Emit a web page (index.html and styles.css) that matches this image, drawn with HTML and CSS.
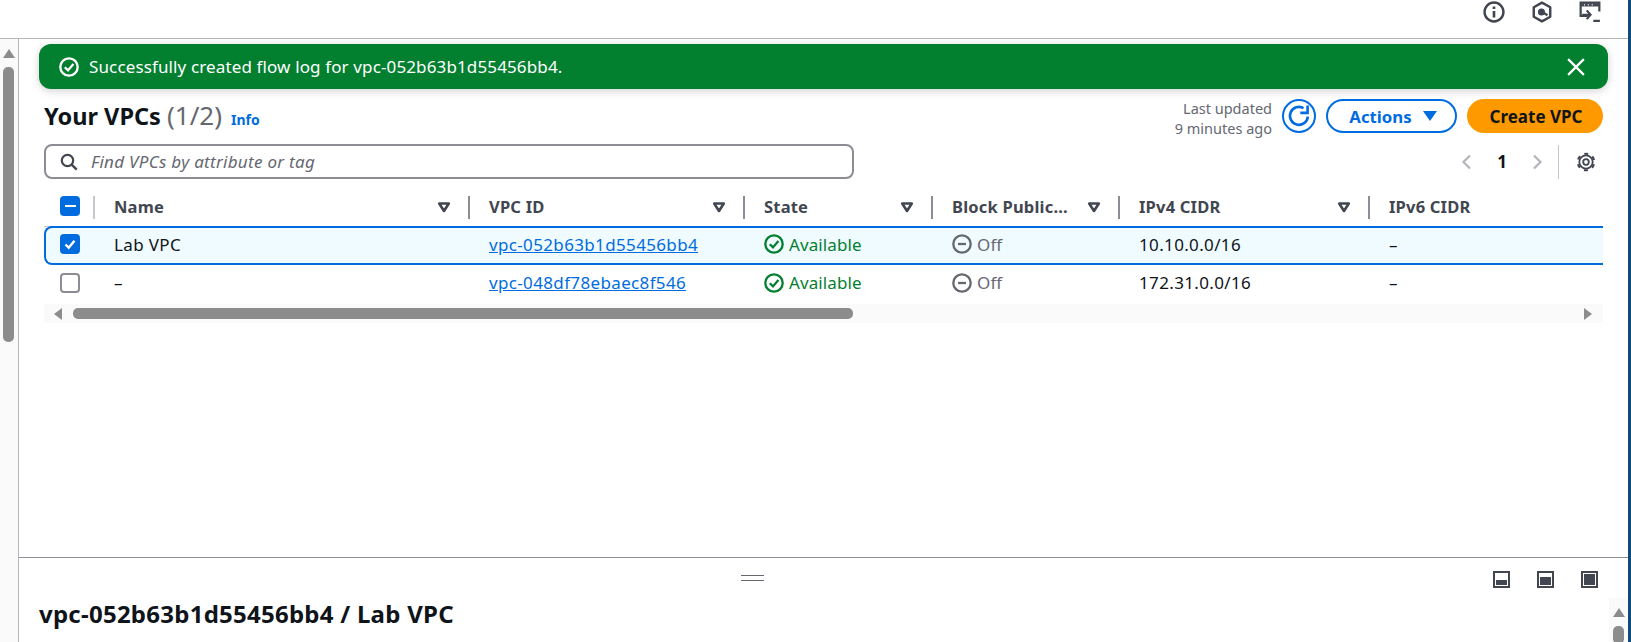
FILE: index.html
```html
<!DOCTYPE html>
<html lang="en">

<head>
    <meta charset="UTF-8">
    <meta name="viewport" content="width=device-width, initial-scale=1.0">
    <title>Your VPCs</title>
    <link rel="stylesheet" href="styles.css">
</head>

<body>

    <svg class="sprite" width="0" height="0">
        <symbol id="caret" viewBox="0 0 16 16">
            <path d="M3.200 4.500h9.600L8 12z" fill="none" stroke="currentColor" stroke-width="2.600" stroke-linejoin="round"/>
        </symbol>
        <symbol id="ok" viewBox="0 0 20 20">
            <circle cx="10" cy="10" r="8.700" fill="none" stroke="currentColor" stroke-width="2.300"/>
            <path d="M5.800 10.200l3.200 3.200 5.400-6.400" fill="none" stroke="currentColor" stroke-width="2.300"/>
        </symbol>
        <symbol id="off" viewBox="0 0 20 20">
            <circle cx="10" cy="10" r="8.700" fill="none" stroke="currentColor" stroke-width="2.300"/>
            <path d="M6 10h8" fill="none" stroke="currentColor" stroke-width="2.300"/>
        </symbol>
    </svg>

    <div class="app">
        <div class="topbar">
            <svg class="top-icon" viewBox="0 0 20 20">
                <circle cx="10" cy="10" r="8.600" fill="none" stroke="currentColor" stroke-width="2.200"/>
                <path d="M10 9v6M10 5v2.200" fill="none" stroke="currentColor" stroke-width="2.400"/>
            </svg>
            <svg class="top-icon" viewBox="0 0 20 20">
                <path d="M10 1.500l7.500 4.200v8.600L10 18.500l-7.500-4.200V5.700z" fill="none" stroke="currentColor" stroke-width="2.200" stroke-linejoin="round"/>
                <circle cx="9.500" cy="10" r="3.200" fill="currentColor"/>
                <path d="M11 10.500l4 2.500" fill="none" stroke="currentColor" stroke-width="2"/>
            </svg>
            <svg class="top-icon" viewBox="0 0 20 20">
                <path d="M8 13.500H1.500v-12h17v8" fill="none" stroke="currentColor" stroke-width="2"/>
                <path d="M2 2h16v3H2z" fill="currentColor"/>
                <path d="M4.500 3.500h1M8 3.500h1M11.500 3.500h1" stroke="#fff" stroke-width="1"/>
                <path d="M7 8.500l3.500 4-3.500 4M3 12.500h7M13 18h6" fill="none" stroke="currentColor" stroke-width="2"/>
            </svg>
        </div>

        <div class="workspace">
            <div class="side-scroll">
                <span class="arrow-up"></span>
                <span class="side-thumb"></span>
            </div>

            <div class="panes">
                <div class="main-pane">
                    <div class="flash">
                        <svg class="flash-icon" viewBox="0 0 20 20"><use href="#ok"/></svg>
                        <span class="flash-text">Successfully created flow log for vpc-052b63b1d55456bb4.</span>
                        <svg class="flash-close" viewBox="0 0 16 16">
                            <path d="M1 1l14 14M15 1L1 15" fill="none" stroke="currentColor" stroke-width="2"/>
                        </svg>
                    </div>

                    <div class="page-head">
                        <div class="title-wrap">
                            <h1 class="title">Your VPCs <span class="count">(1/2)</span></h1>
                            <a class="info" href="#">Info</a>
                        </div>
                        <div class="head-actions">
                            <div class="updated">Last updated<br>9 minutes ago</div>
                            <button class="btn btn-icon">
                                <svg viewBox="0 0 20 20" width="26" height="26">
                                    <path d="M16.800 10.500A6.900 6.900 0 1 1 13.500 4" fill="none" stroke="currentColor" stroke-width="2"/>
                                    <path d="M16.600 2v5.600H11" fill="none" stroke="currentColor" stroke-width="2"/>
                                </svg>
                            </button>
                            <button class="btn btn-actions">Actions <span class="btn-caret"></span></button>
                            <button class="btn btn-primary">Create VPC</button>
                        </div>
                    </div>

                    <div class="filter-row">
                        <div class="search">
                            <svg viewBox="0 0 18 18" width="18" height="18">
                                <circle cx="7.500" cy="7.500" r="5.700" fill="none" stroke="currentColor" stroke-width="2.200"/>
                                <path d="M11.700 11.700l5 5" fill="none" stroke="currentColor" stroke-width="2.400"/>
                            </svg>
                            <span class="search-text">Find VPCs by attribute or tag</span>
                        </div>
                        <div class="pager">
                            <svg class="chev" viewBox="0 0 12 18"><path d="M10 2.500L3.500 9l6.500 6.500" fill="none" stroke="currentColor" stroke-width="2.200"/></svg>
                            <span class="page-no">1</span>
                            <svg class="chev" viewBox="0 0 12 18"><path d="M2 2.500L8.500 9 2 15.500" fill="none" stroke="currentColor" stroke-width="2.200"/></svg>
                            <span class="pager-sep"></span>
                            <svg class="gear" viewBox="0 0 20 20">
                                <circle cx="10" cy="10" r="6.700" fill="none" stroke="currentColor" stroke-width="1.800"/>
                                <circle cx="10" cy="10" r="8.300" fill="none" stroke="currentColor" stroke-width="2" stroke-dasharray="4 4.690" stroke-dashoffset="-2.340"/>
                                <circle cx="10" cy="10" r="2.800" fill="none" stroke="currentColor" stroke-width="1.800"/>
                            </svg>
                        </div>
                    </div>

                    <div class="table">
                        <div class="row row-head">
                            <div class="cell cell-check"><span class="check check-on check-mixed"></span></div>
                            <div class="cell col-head"><span>Name</span><svg class="caret"><use href="#caret"/></svg></div>
                            <div class="cell col-head"><span>VPC ID</span><svg class="caret"><use href="#caret"/></svg></div>
                            <div class="cell col-head"><span>State</span><svg class="caret"><use href="#caret"/></svg></div>
                            <div class="cell col-head"><span>Block Public...</span><svg class="caret"><use href="#caret"/></svg></div>
                            <div class="cell col-head"><span>IPv4 CIDR</span><svg class="caret"><use href="#caret"/></svg></div>
                            <div class="cell col-head col-last"><span>IPv6 CIDR</span></div>
                        </div>

                        <div class="row row-selected">
                            <div class="cell cell-check">
                                <span class="check check-on">
                                    <svg viewBox="0 0 20 20" width="20" height="20"><path d="M5.500 10.500l3.200 3.200 5.800-7" fill="none" stroke="#fff" stroke-width="2.400"/></svg>
                                </span>
                            </div>
                            <div class="cell">Lab VPC</div>
                            <div class="cell"><a class="link" href="#">vpc-052b63b1d55456bb4</a></div>
                            <div class="cell status-ok"><svg class="status-icon"><use href="#ok"/></svg>Available</div>
                            <div class="cell status-off"><svg class="status-icon"><use href="#off"/></svg>Off</div>
                            <div class="cell">10.10.0.0/16</div>
                            <div class="cell">–</div>
                        </div>

                        <div class="row">
                            <div class="cell cell-check"><span class="check"></span></div>
                            <div class="cell">–</div>
                            <div class="cell"><a class="link" href="#">vpc-048df78ebaec8f546</a></div>
                            <div class="cell status-ok"><svg class="status-icon"><use href="#ok"/></svg>Available</div>
                            <div class="cell status-off"><svg class="status-icon"><use href="#off"/></svg>Off</div>
                            <div class="cell">172.31.0.0/16</div>
                            <div class="cell">–</div>
                        </div>

                        <div class="h-scroll">
                            <span class="arrow-left"></span>
                            <span class="h-thumb"></span>
                            <span class="arrow-right"></span>
                        </div>
                    </div>
                </div>

                <div class="split-pane">
                    <div class="split-bar">
                        <span class="handle"></span>
                        <div class="split-icons">
                            <span class="split-icon"><span class="fill-sm"></span></span>
                            <span class="split-icon"><span class="fill-md"></span></span>
                            <span class="split-icon"><span class="fill-lg"></span></span>
                        </div>
                    </div>
                    <div class="split-body">
                        <h2 class="split-title">vpc-052b63b1d55456bb4 / Lab VPC</h2>
                        <div class="split-scroll">
                            <span class="arrow-up"></span>
                            <span class="split-thumb"></span>
                        </div>
                    </div>
                </div>
            </div>
        </div>
    </div>

</body>

</html>
```

FILE: styles.css
```css
* {
    box-sizing: border-box;
}

html,
body {
    margin: 0;
    height: 642px;
    overflow: hidden;
}

body {
    background: #0f4a7c;
    color: #0f141a;
    font-family: "Noto Sans", sans-serif;
    font-size: 17px;
}

.sprite {
    position: absolute;
}

.app {
    width: 1628px;
    height: 642px;
    background: #fff;
    display: flex;
    flex-direction: column;
}

/* top bar */
.topbar {
    height: 39px;
    flex: none;
    border-bottom: 1px solid #b4b4bb;
    display: flex;
    justify-content: flex-end;
    gap: 26px;
    padding: 1px 27px 0 0;
    color: #424650;
}

.top-icon {
    width: 22px;
    height: 22px;
}

.workspace {
    flex: 1;
    display: flex;
    min-height: 0;
}

.side-scroll {
    width: 19px;
    flex: none;
    background: #fafafa;
    border-right: 1px solid #b4b4bb;
    padding: 10px 0 0 3px;
    display: flex;
    flex-direction: column;
    gap: 9px;
}

.arrow-up {
    width: 0;
    height: 0;
    border-left: 6px solid transparent;
    border-right: 6px solid transparent;
    border-bottom: 9px solid #8c8c8c;
}

.side-thumb {
    width: 11px;
    height: 275px;
    border-radius: 5px;
    background: #8c8c8c;
}

.panes {
    flex: 1;
    min-width: 0;
    display: flex;
    flex-direction: column;
}

.main-pane {
    height: 518px;
    flex: none;
    padding: 5px 25px 0 25px;
}

/* flash */
.flash {
    height: 45px;
    margin: 0 -5px 0 -5px;
    padding: 0 23px 0 20px;
    border-radius: 12px;
    background: #037f30;
    color: #fff;
    display: flex;
    align-items: center;
    box-shadow: 0 2px 8px rgba(0, 7, 22, 0.18);
}

.flash-icon {
    width: 20px;
    height: 20px;
}

.flash-text {
    margin-left: 10px;
    flex: 1;
    letter-spacing: 0.13px;
}

.flash-close {
    width: 18px;
    height: 18px;
}

/* page header */
.page-head {
    height: 34px;
    margin-top: 10px;
    display: flex;
    justify-content: space-between;
}

.title-wrap {
    display: flex;
    align-items: baseline;
    gap: 9px;
}

.title {
    margin: 0;
    font-size: 23.5px;
    font-weight: 700;
    line-height: 32px;
}

.count {
    font-size: 26px;
    font-weight: 400;
    color: #656871;
}

.info {
    color: #006ce0;
    font-size: 14px;
    font-weight: 700;
    text-decoration: none;
}

.head-actions {
    display: flex;
    align-items: center;
    gap: 10px;
}

.updated {
    padding-top: 4px;
    font-size: 14.5px;
    line-height: 20px;
    color: #656871;
    text-align: right;
}

.btn {
    height: 34px;
    border-radius: 17px;
    font-family: inherit;
    font-size: 17px;
    font-weight: 700;
    display: flex;
    align-items: center;
    justify-content: center;
}

.btn-icon {
    width: 34px;
    padding: 0;
    background: #fff;
    border: 2px solid #006ce0;
    color: #006ce0;
}

.btn-actions {
    width: 131px;
    gap: 11px;
    padding: 0 0 0 3px;
    font-size: 16.8px;
    background: #fff;
    border: 2px solid #006ce0;
    color: #006ce0;
}

.btn-caret {
    width: 0;
    height: 0;
    border-left: 7px solid transparent;
    border-right: 7px solid transparent;
    border-top: 10px solid #006ce0;
}

.btn-primary {
    width: 136px;
    padding: 0 0 0 2px;
    background: #ff9900;
    border: none;
    color: #0f141a;
}

/* filter row */
.filter-row {
    height: 35px;
    margin-top: 11px;
    display: flex;
    justify-content: space-between;
}

.search {
    width: 810px;
    border: 2px solid #8c8c94;
    border-radius: 8px;
    display: flex;
    align-items: center;
    gap: 13px;
    padding-left: 14px;
    color: #424650;
}

.search-text {
    font-style: italic;
    color: #656871;
    letter-spacing: 0.3px;
}

.pager {
    display: flex;
    align-items: center;
    color: #b4b4bb;
}

.chev {
    width: 12px;
    height: 18px;
}

.page-no {
    width: 60px;
    text-align: center;
    font-weight: 700;
    color: #0f141a;
}

.pager-sep {
    width: 1px;
    height: 34px;
    margin: 0 17px 0 14px;
    background: #c6c6cd;
}

.gear {
    width: 20px;
    height: 20px;
    margin-right: 7px;
    color: #424650;
}

/* table */
.table {
    margin-top: 17px;
}

.row {
    display: grid;
    grid-template-columns: 49px 375px 275px 188px 187px 250px 1fr;
    height: 38px;
    padding-bottom: 3px;
    align-items: center;
}

.row-head {
    height: 31px;
    padding-bottom: 0;
    align-items: start;
    border-bottom: 1px solid #c6c6cd;
}

.row-selected {
    height: 39px;
    margin-top: -1px;
    background: #f0fbff;
    border: 2px solid #006ce0;
    border-right: none;
    border-radius: 8px 0 0 8px;
    grid-template-columns: 47px 375px 275px 188px 187px 250px 1fr;
}

.cell {
    padding-left: 21px;
    display: flex;
    align-items: center;
    letter-spacing: 0.35px;
}

.cell-check {
    padding-left: 16px;
}

.row-selected .cell-check {
    padding-left: 14px;
}

.col-head {
    height: 23px;
    padding: 0 16px 2px 19px;
    justify-content: space-between;
    font-size: 16.5px;
    font-weight: 700;
    letter-spacing: 0.2px;
    color: #424650;
    border-left: 2px solid #8c8c94;
}

.row-head .col-head:nth-child(2) {
    border-left-color: #c6c6cd;
}

.caret {
    width: 16px;
    height: 16px;
    color: #424650;
}

.check {
    width: 20px;
    height: 20px;
    border: 2px solid #8c8c94;
    border-radius: 4px;
    background: #fff;
    display: block;
}

.check-on {
    background: #006ce0;
    border: none;
}

.check-mixed {
    display: flex;
    align-items: center;
    justify-content: center;
}

.check-mixed::before {
    content: "";
    width: 11px;
    height: 2px;
    background: #fff;
}

.link {
    color: #006ce0;
}

.status-ok {
    color: #037f30;
    letter-spacing: 0.1px;
}

.status-off {
    color: #656871;
    letter-spacing: 0.1px;
}

.status-icon {
    width: 20px;
    height: 20px;
    margin-right: 5px;
}

.h-scroll {
    height: 19px;
    margin-top: 1px;
    background: #fafafa;
    display: flex;
    align-items: center;
    padding: 0 11px 0 10px;
}

.arrow-left {
    width: 0;
    height: 0;
    border-top: 6px solid transparent;
    border-bottom: 6px solid transparent;
    border-right: 8px solid #8c8c8c;
}

.h-thumb {
    width: 780px;
    height: 11px;
    margin-left: 11px;
    border-radius: 5px;
    background: #8c8c8c;
}

.arrow-right {
    width: 0;
    height: 0;
    margin-left: auto;
    border-top: 6px solid transparent;
    border-bottom: 6px solid transparent;
    border-left: 8px solid #8c8c8c;
}

/* split panel */
.split-pane {
    flex: 1;
    min-height: 0;
    border-top: 1px solid #8c8c94;
    position: relative;
}

.split-bar {
    height: 40px;
    display: flex;
    justify-content: flex-end;
}

.handle {
    position: absolute;
    left: 722px;
    top: 17px;
    width: 23px;
    height: 6px;
    border-top: 1px solid #656871;
    border-bottom: 1px solid #656871;
}

.split-icons {
    display: flex;
    gap: 27px;
    padding: 13px 30px 0 0;
}

.split-icon {
    width: 17px;
    height: 17px;
    border: 2px solid #424650;
    padding: 1px;
    display: flex;
    align-items: flex-end;
}

.split-icon span {
    width: 100%;
    background: #424650;
}

.fill-sm {
    height: 5px;
}

.fill-md {
    height: 8px;
}

.fill-lg {
    height: 11px;
}

.split-body {
    display: flex;
    justify-content: space-between;
    padding-left: 20px;
}

.split-title {
    margin: 0;
    font-size: 24px;
    font-weight: 700;
    line-height: 32px;
    letter-spacing: 0.25px;
}

.split-scroll {
    width: 19px;
    height: 46px;
    background: #fafafa;
    padding: 10px 0 0 4px;
    display: flex;
    flex-direction: column;
    gap: 9px;
}

.split-thumb {
    width: 11px;
    height: 40px;
    border-radius: 5px;
    background: #8c8c8c;
}
```
